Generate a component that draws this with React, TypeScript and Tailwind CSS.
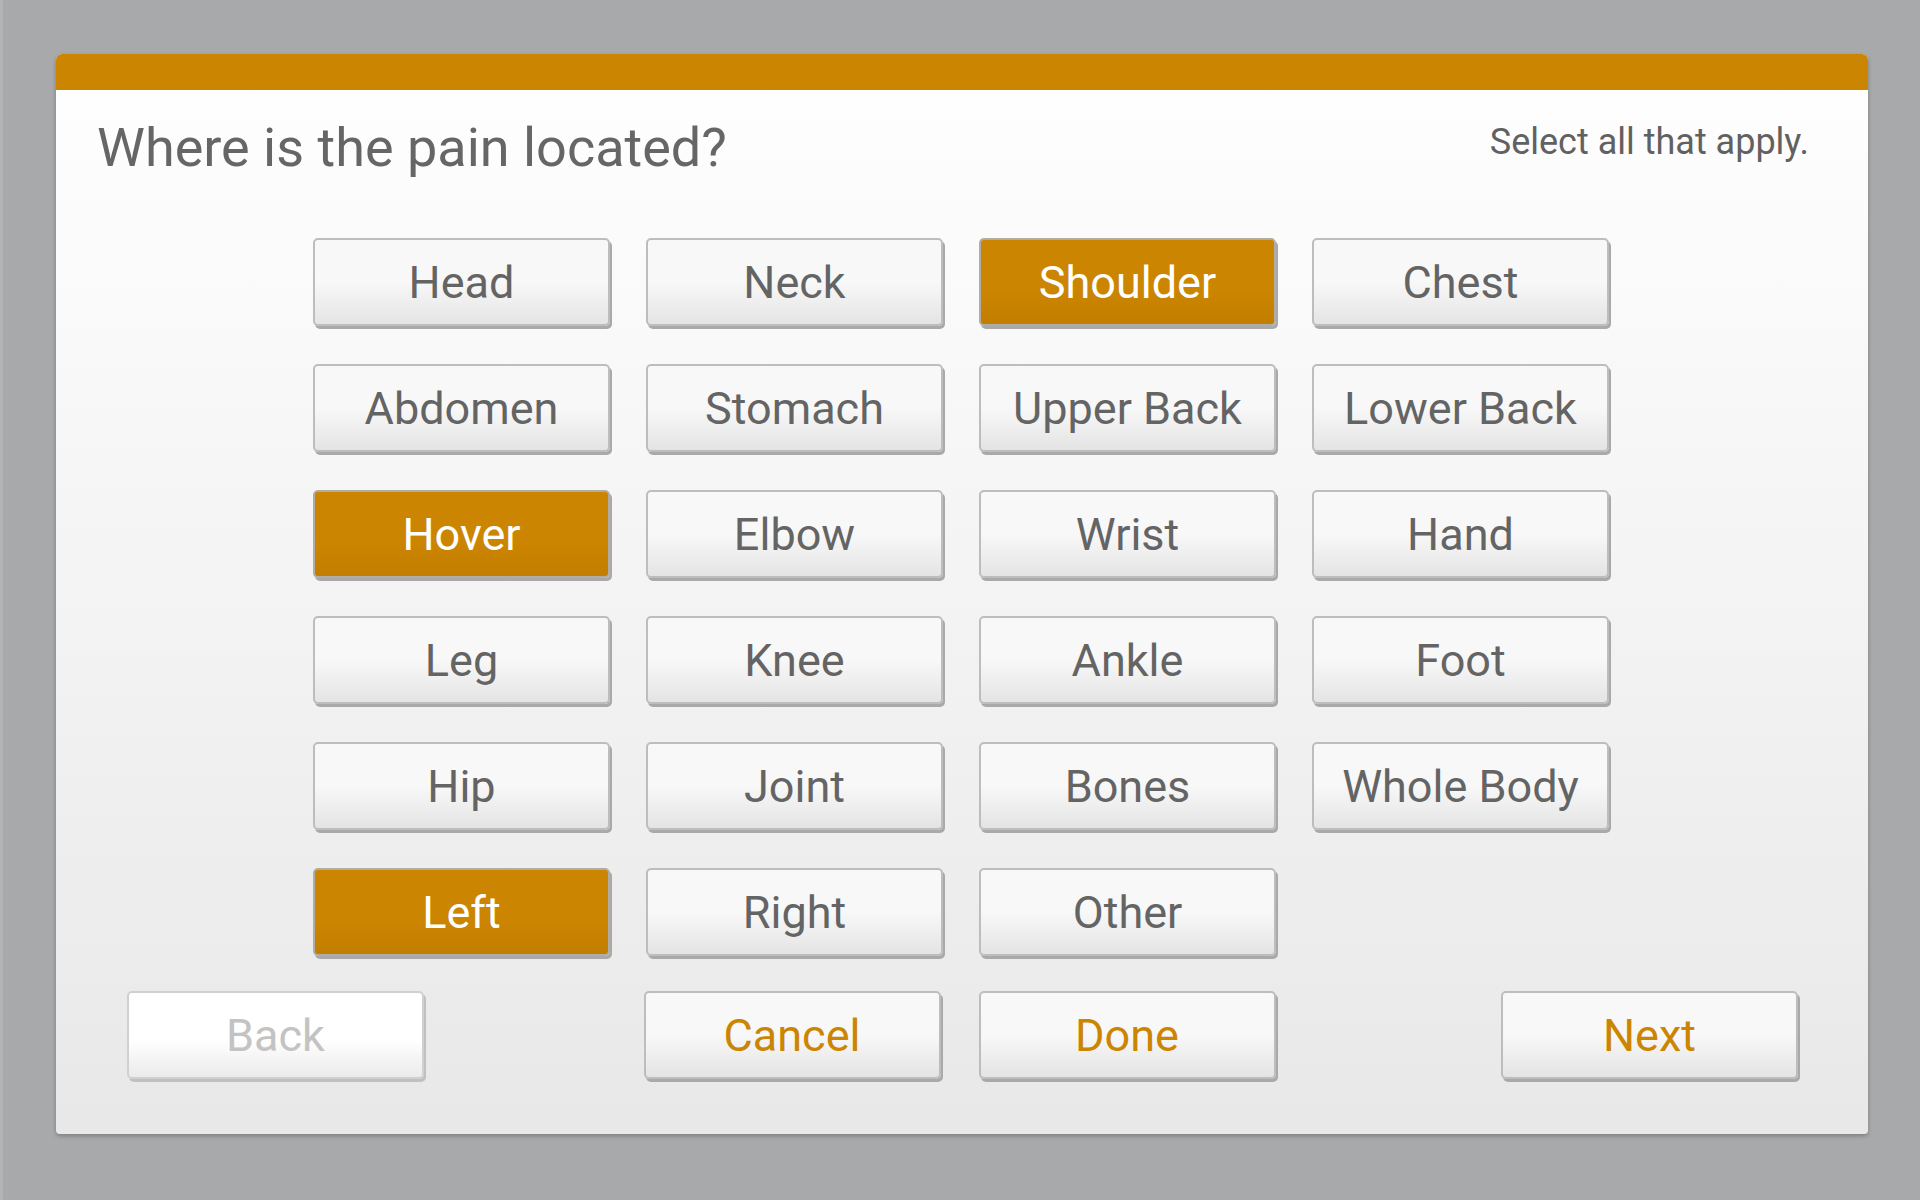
import { useState } from "react";

type Part = { label: string };

const parts: Part[] = [
  { label: "Head" },
  { label: "Neck" },
  { label: "Shoulder" },
  { label: "Chest" },
  { label: "Abdomen" },
  { label: "Stomach" },
  { label: "Upper Back" },
  { label: "Lower Back" },
  { label: "Hover" },
  { label: "Elbow" },
  { label: "Wrist" },
  { label: "Hand" },
  { label: "Leg" },
  { label: "Knee" },
  { label: "Ankle" },
  { label: "Foot" },
  { label: "Hip" },
  { label: "Joint" },
  { label: "Bones" },
  { label: "Whole Body" },
  { label: "Left" },
  { label: "Right" },
  { label: "Other" },
];

const base =
  "w-[297px] h-[88px] rounded-[5px] border-2 flex items-center justify-center text-[45px] leading-none shadow-[2px_3px_0_#a9a9a9]";

const App = () => {
  const [selected, setSelected] = useState<string[]>(["Shoulder", "Hover", "Left"]);

  const toggle = (label: string): void => {
    setSelected(
      selected.includes(label)
        ? selected.filter((s) => s !== label)
        : [...selected, label]
    );
  };

  return (
    <div className="w-full h-[1200px] bg-[#a8a9ab] border-l-[3px] border-[#b3b4b6] pt-[54px] pl-[53px] pr-[52px] font-['Roboto',sans-serif]">
      <div className="h-[1080px] rounded-t-[6px] rounded-b-[4px] overflow-hidden bg-linear-to-b from-white to-[#e8e8e8] shadow-[0_2px_4px_rgba(0,0,0,0.25)] flex flex-col">
        <div className="h-[36px] bg-[#cc8500] shrink-0" />

        {/* header */}
        <div className="flex justify-between items-start pt-[31px] pl-[41px] pr-[59px]">
          <h1 className="text-[54px] leading-none text-[#666666]">
            Where is the pain located?
          </h1>
          <p className="text-[36px] leading-none text-[#616161] mt-[3px]">
            Select all that apply.
          </p>
        </div>

        {/* body part grid */}
        <div className="mt-[63px] flex justify-center">
          <div className="grid grid-cols-[repeat(4,297px)] gap-x-[36px] gap-y-[38px] -translate-x-[1px]">
            {parts.map((p) => {
              const on = selected.includes(p.label);
              return (
                <button
                  key={p.label}
                  onClick={() => toggle(p.label)}
                  className={`${base} ${
                    on
                      ? "bg-linear-to-b from-[#cc8500] from-60% to-[#c27e00] border-[#b2aca2] text-white"
                      : "bg-linear-to-b from-[#f8f8f8] from-50% to-[#e4e4e4] border-[#bdbdbd] text-[#646464]"
                  }`}
                >
                  {p.label}
                </button>
              );
            })}
          </div>
        </div>

        {/* footer */}
        <div className="mt-[35px] flex justify-between pl-[71px] pr-[70px]">
          <button
            className={`${base} bg-linear-to-b from-white from-55% to-[#ebebeb] border-[#d0d0d0] text-[#c3c3c3] shadow-[2px_3px_0_#c0c0c0]`}
          >
            Back
          </button>
          <div className="flex gap-[38px] -translate-x-[3px]">
            <button
              className={`${base} bg-linear-to-b from-[#f8f8f8] from-50% to-[#e4e4e4] border-[#bdbdbd] text-[#cc8500]`}
            >
              Cancel
            </button>
            <button
              className={`${base} bg-linear-to-b from-[#f8f8f8] from-50% to-[#e4e4e4] border-[#bdbdbd] text-[#cc8500]`}
            >
              Done
            </button>
          </div>
          <button
            className={`${base} bg-linear-to-b from-[#f8f8f8] from-50% to-[#e4e4e4] border-[#bdbdbd] text-[#cc8500]`}
          >
            Next
          </button>
        </div>
      </div>
    </div>
  );
};

export default App;
